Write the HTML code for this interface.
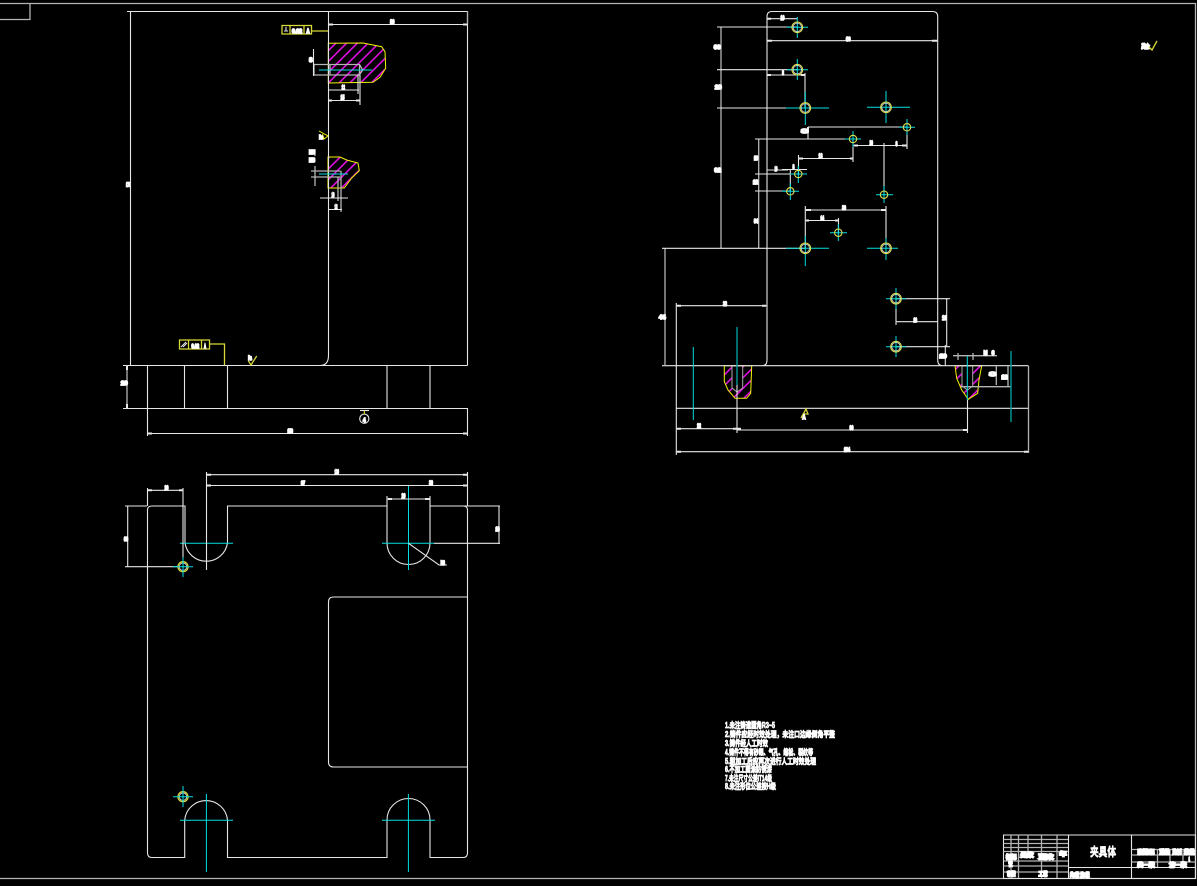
<!DOCTYPE html>
<html lang="zh">
<head>
<meta charset="utf-8">
<title>夹具体</title>
<style>
html,body{margin:0;padding:0;background:#000;width:1197px;height:886px;overflow:hidden}
svg{display:block}
.w{fill:none;stroke:#e6e6e6;stroke-width:1.1}
.g{fill:none;stroke:#b4b4b4;stroke-width:1.3}
.t{fill:none;stroke:#e8e8e8;stroke-width:2}
.c{fill:none;stroke:#00e0e0;stroke-width:1}
.d{fill:none;stroke:#009a9a;stroke-width:1.4}
.y{fill:none;stroke:#f0f000;stroke-width:1}
.y2{fill:none;stroke:#d8d838;stroke-width:1.3}
.h{fill:url(#hatch);stroke:#f4f400;stroke-width:1}
text{font-family:"Liberation Sans","Noto Sans CJK SC",sans-serif;font-weight:bold;fill:#fff;stroke:#fff;stroke-width:1.5;font-size:6.5px}
.n{font-size:8px;stroke-width:.8}
.b{font-size:12px;stroke-width:.6}
.s{font-size:5.5px;stroke-width:1.7}
</style>
</head>
<body>
<svg width="1197" height="886" viewBox="0 0 1197 886" xmlns="http://www.w3.org/2000/svg">
<defs>
<pattern id="hatch" patternUnits="userSpaceOnUse" width="7.6" height="7.6" patternTransform="rotate(45)">
<rect width="7.6" height="7.6" fill="#000"/>
<line x1="2" y1="0" x2="2" y2="7.6" stroke="#ee10ee" stroke-width="1.5"/>
</pattern>
</defs>
<rect width="1197" height="886" fill="#000"/>

<!-- drawing frame -->
<path class="g" d="M30 3.5H1195.5V878.5H0M0 3.5H30V19.5H0"/>

<!-- FRONT VIEW -->
<path class="h" d="M328.3 43.3L363 43L381.7 46.7L385 51.7L385.7 68.3L380 77.3L373 82.3L328.3 83Z"/>
<path class="h" d="M328 157L340 157L346.7 160L358 163L359.3 170.7L351.7 178L344.3 188L328 188Z"/>
<path class="w" d="M127 11.5H467.5V365.5M130.5 11V365.5M328.5 11V355.5Q328.5 365.5 320 365.5M123 365.5H467.5M123 408.5H467.5M147.5 365.5V436M184.5 365.5V408M227.5 365.5V408M387 365.5V408M430 365.5V408M467.5 408V436M147.5 433.5H467.5M328.5 24.5H467.5"/>
<path class="g" d="M127 365.5V408M467.5 11V24"/>
<path class="t" d="M127 366V370M127 404V408M148 433.5H152M463 433.5H467M328 24.5H333M463 24.5H467"/>
<!-- hole 1 -->
<path class="g" d="M314 64.5H359.5V75H314ZM330 64.5V75M359.5 64.5L362.6 70L359.5 75"/>
<path class="c" d="M319 70H372"/>
<path class="w" d="M313.5 49V76M328 90H359M328 100.5H360M360 75V105M358 75V94"/>
<path class="t" d="M328 100.5H332M356 100.5H360"/>
<!-- hole 2 -->
<path class="g" d="M311 171H340.5M311 177H340M341 171V212M338 177V201M315 149V156M315 166V186"/>
<path class="c" d="M319 174H348"/>
<path class="w" d="M320 198H348M328 209.5H342"/>
<!-- tolerance frames -->
<path class="y2" d="M282 25.5H311.5V34H282ZM290 25.5V34M304 25.5V34M311.5 31H328"/>
<path class="w" d="M284 31H288M286 27V31"/>
<path class="y2" d="M179.5 340H209.5V349H179.5ZM188.5 340V349M201.5 340V349M209.5 344H224.5V365"/>
<path class="w" d="M181 347L186 342M183 347L187 343"/>
<!-- roughness marks -->
<path class="y" d="M319 131L328 136L324 139L322.5 134"/>
<path class="y2" d="M248.3 360.7L251 365L256.7 356"/>
<!-- datum -->
<circle class="w" cx="364.3" cy="418.7" r="4.6"/>
<path class="w" d="M360 410.5H369"/>
<path class="y" d="M364.3 411V414"/>
<text x="363" y="422" textLength="2.5" lengthAdjust="spacingAndGlyphs" class="s">4</text>
<text x="390" y="24" textLength="4.5" lengthAdjust="spacingAndGlyphs">80</text>
<text x="292" y="33" textLength="10" lengthAdjust="spacingAndGlyphs" class="s">0.02</text>
<text x="306.5" y="33" textLength="3" lengthAdjust="spacingAndGlyphs" class="s">A</text>
<text x="309" y="62" textLength="3.5" lengthAdjust="spacingAndGlyphs">8</text>
<text x="341.5" y="89.5" textLength="3.5" lengthAdjust="spacingAndGlyphs">12</text>
<text x="340.5" y="99.5" textLength="4" lengthAdjust="spacingAndGlyphs">15</text>
<text x="319" y="139" textLength="4" lengthAdjust="spacingAndGlyphs" class="s">Ra</text>
<text x="309" y="154" textLength="6" lengthAdjust="spacingAndGlyphs" class="s">M6</text>
<text x="309" y="162" textLength="6" lengthAdjust="spacingAndGlyphs" class="s">M8</text>
<text x="331.5" y="197" textLength="3" lengthAdjust="spacingAndGlyphs">10</text>
<text x="334.5" y="209" textLength="3" lengthAdjust="spacingAndGlyphs">12</text>
<text x="126" y="186.5" textLength="4" lengthAdjust="spacingAndGlyphs" class="s">178</text>
<text x="121" y="385" textLength="6.5" lengthAdjust="spacingAndGlyphs" class="s">20</text>
<text x="287.5" y="433" textLength="5.5" lengthAdjust="spacingAndGlyphs" class="s">150</text>
<text x="248" y="360" textLength="4" lengthAdjust="spacingAndGlyphs">Ra</text>
<text x="191.5" y="348" textLength="7.5" lengthAdjust="spacingAndGlyphs" class="s">0.02</text>
<text x="204" y="348" textLength="2" lengthAdjust="spacingAndGlyphs" class="s">A</text>

<!-- PLAN VIEW -->
<path class="w" d="M152 506H185V543A21.5 21.5 0 0 0 227.5 543V506H387V543A21.5 21.5 0 0 0 430 543V506H463Q467.5 506 467.5 510V853Q467.5 857.5 463 857.5H430V820A21.5 21.5 0 0 0 387 820V857.5H227.5V820A21.5 21.5 0 0 0 184.7 820V857.5H152Q147.5 857.5 147.5 853V510Q147.5 506 152 506Z"/>
<path class="w" d="M467.5 597H333.5Q328.5 597 328.5 602V762Q328.5 767 333.5 767H467.5"/>
<path class="c" d="M180 543.3H233M382 543.3H434M408.5 485V570M180 820.3H233M206.4 794V872M382 820.3H435M408.4 794V872"/>
<path class="w" d="M206.5 472V570M467.5 472V506M147.5 488V506M183 488V558M387 496V506M430 496V506M125 506H147M125 566.7H178M127.7 506V566.7M147.5 490.3H183M206.5 474.7H467.5M206.5 485.5H408M408 485.5H467.5M387 499H430M434 543.3H500M430 506H500M499 506V544M408.5 543.3L439 565H447"/>
<path class="t" d="M148 490.3H152M179 490.3H183M207 474.7H211M463 474.7H467M207 485.5H211M463 485.5H467M388 499H392M425 499H430"/>
<text x="164.5" y="490" textLength="4" lengthAdjust="spacingAndGlyphs">20</text>
<text x="334.5" y="474" textLength="4.5" lengthAdjust="spacingAndGlyphs">130</text>
<text x="301" y="485" textLength="4" lengthAdjust="spacingAndGlyphs" class="s">97</text>
<text x="429" y="485" textLength="4" lengthAdjust="spacingAndGlyphs">30</text>
<text x="401.5" y="498" textLength="4" lengthAdjust="spacingAndGlyphs">20</text>
<text x="124" y="541" textLength="4" lengthAdjust="spacingAndGlyphs" class="s">30</text>
<text x="495.5" y="531" textLength="4" lengthAdjust="spacingAndGlyphs" class="s">18</text>
<text x="440.5" y="565" textLength="4.5" lengthAdjust="spacingAndGlyphs">R8</text>

<g id="cp">
<circle class="y2" cx="183" cy="566.7" r="5"/>
<circle cx="183" cy="566.7" r="3.7" fill="none" stroke="#ddd" stroke-width=".8"/>
<path class="c" d="M173 566.7H193M183 557V577"/>
<circle class="y2" cx="183" cy="796.7" r="5"/>
<circle cx="183" cy="796.7" r="3.7" fill="none" stroke="#ddd" stroke-width=".8"/>
<path class="c" d="M173 796.7H193M183 786V807"/>
</g>

<!-- RIGHT VIEW -->
<path class="h" d="M724.3 365.7V381.7L728 390L735 398.3H746.7L750.7 393.3L751.7 365.7Z"/>
<path class="h" d="M955 365.7L956.7 378.3L961.7 390L968.3 399.3L977.7 393.3L979 380L981.7 365.7Z"/>
<path d="M732 366H742.7V388L737 392L732 388Z" fill="#000" stroke="#aaa"/>
<path d="M962 366H972.7V386L967.5 390L962 386Z" fill="#000" stroke="#aaa"/>

<path class="w" d="M767 360V16.5Q767 11.5 772 11.5H932.5Q937.7 11.5 937.7 16.5V360Q937.7 365.7 943 365.7H1028.5M767 360Q767 365.7 762 365.7H662M676.3 303V455M676.3 305.7H767M676 408.3H1028.5M762 365.7H943"/>
<path class="g" d="M1028.5 365.7V453M665 248V365.7M721 27V248M758.7 139V248"/>
<path class="w" d="M676.3 428.7H737M737 430H967.5M676.3 451.7H1028.5M737 385V433M967.5 400V433M662 248.3H805M767 18.7H797M767 40.7H937.7M717 27H797M717 69.7H797M717 108H790M767 75H805M805 73V108M808 127H907M808 127V139M755 139H853M853 139V162M755 174H798M755 191H790M853 145.5H907M907 127V149M884 143V195M798.5 158.5H853M798.5 155V175M767 170H788M782 169.5H807M790.3 170V191M805.3 206V248M805.3 210H886M886 206V248M805.3 220.5H838.5M838.5 218V233M896 298.7H950M896 346.7H950M946.7 298V347M896 321.7H938M896 298V325M945.3 345V366"/>
<path class="t" d="M677 428.7H681M733 428.7H741M963 430H967M677 451.7H681M1024 451.7H1028M767 18.7H771M767 40.7H772M932 40.7H937M767 75H771M801 75H805M806 210H811M881 210H886M806 220.5H809M835 220.5H838M677 305.7H681M762 305.7H766M808 127V133M854 145.5H858M902 145.5H907M799 158.5H803M850 158.5H853"/>
<path class="g" d="M953 355.7H997M961 386.7H1011M996.3 365.7V385M1008 365.7V387M958 353V360M973 353V360"/>
<path class="c" d="M693.3 347V420M967.3 356V400"/>
<path class="d" d="M737 327V385M1011 351V422"/>

<!-- holes big -->
<g class="c">
<path d="M787 27.3H808M797.3 17V38M787 69.7H808M797.3 59V80M786 108H829M805.3 92V125M867 107.3H910M886 91V123M786 248.3H829M805.3 236V266M867 248.3H898M886 238V260M886 298.7H906M896 288V309M886 346.7H906M896 336V357"/>
<path d="M899 127.3H915M907 119V135M845 139H861M853 131V147M790 174H807M798.3 166V183M782 191.3H799M790.3 183V200M876 194.7H893M884 186V203M830 232.7H847M838.3 224V241"/>
</g>
<g fill="none" stroke="#dede50" stroke-width="1.1">
<circle cx="797.3" cy="27.3" r="5.3"/><circle cx="797.3" cy="69.7" r="5.3"/><circle cx="805.3" cy="108" r="5.3"/><circle cx="886" cy="107.3" r="5.3"/><circle cx="805.3" cy="248.3" r="5.3"/><circle cx="886" cy="248.3" r="5.3"/><circle cx="896" cy="298.7" r="5.3"/><circle cx="896" cy="346.7" r="5.3"/>
<circle cx="907" cy="127.3" r="3.7"/><circle cx="853" cy="139" r="3.7"/><circle cx="798.3" cy="174" r="3.7"/><circle cx="790.3" cy="191.3" r="3.7"/><circle cx="884" cy="194.7" r="3.7"/><circle cx="838.3" cy="232.7" r="3.7"/>
</g>
<g fill="none" stroke="#e8e8e8" stroke-width=".7">
<circle cx="797.3" cy="27.3" r="4.2"/><circle cx="797.3" cy="69.7" r="4.2"/><circle cx="805.3" cy="108" r="4.2"/><circle cx="886" cy="107.3" r="4.2"/><circle cx="805.3" cy="248.3" r="4.2"/><circle cx="886" cy="248.3" r="4.2"/><circle cx="896" cy="298.7" r="4.2"/><circle cx="896" cy="346.7" r="4.2"/>
</g>

<!-- right view labels -->
<text x="780.5" y="20" textLength="4" lengthAdjust="spacingAndGlyphs">10</text>
<text x="846" y="41" textLength="4.5" lengthAdjust="spacingAndGlyphs" class="s">60</text>
<text x="714" y="49" textLength="6.5" lengthAdjust="spacingAndGlyphs" class="s">30</text>
<text x="715" y="89" textLength="6.5" lengthAdjust="spacingAndGlyphs" class="s">28</text>
<text x="714.5" y="172" textLength="6.5" lengthAdjust="spacingAndGlyphs" class="s">92</text>
<text x="782" y="75" textLength="2" lengthAdjust="spacingAndGlyphs">8</text>
<text x="801.5" y="133" textLength="6" lengthAdjust="spacingAndGlyphs" class="s">8</text>
<text x="754" y="160" textLength="4" lengthAdjust="spacingAndGlyphs" class="s">16</text>
<text x="753" y="184" textLength="5" lengthAdjust="spacingAndGlyphs" class="s">12</text>
<text x="754" y="223" textLength="4" lengthAdjust="spacingAndGlyphs" class="s">34</text>
<text x="869.5" y="145" textLength="3.5" lengthAdjust="spacingAndGlyphs">20</text>
<text x="895.5" y="146" textLength="2" lengthAdjust="spacingAndGlyphs">8</text>
<text x="818.5" y="158" textLength="4" lengthAdjust="spacingAndGlyphs">18</text>
<text x="774.5" y="171" textLength="3" lengthAdjust="spacingAndGlyphs">10</text>
<text x="792.5" y="169" textLength="2" lengthAdjust="spacingAndGlyphs">8</text>
<text x="842" y="210" textLength="4" lengthAdjust="spacingAndGlyphs">30</text>
<text x="820.5" y="220" textLength="3.5" lengthAdjust="spacingAndGlyphs" class="s">14</text>
<text x="723" y="306" textLength="4" lengthAdjust="spacingAndGlyphs">33</text>
<text x="659" y="319" textLength="6.5" lengthAdjust="spacingAndGlyphs" class="s">44</text>
<text x="913.5" y="322" textLength="3.5" lengthAdjust="spacingAndGlyphs" class="s">16</text>
<text x="942" y="320" textLength="4.5" lengthAdjust="spacingAndGlyphs">18</text>
<text x="939.5" y="358" textLength="7" lengthAdjust="spacingAndGlyphs" class="s">10</text>
<text x="983.5" y="355" textLength="4" lengthAdjust="spacingAndGlyphs">M</text>
<text x="991.5" y="355" textLength="3" lengthAdjust="spacingAndGlyphs">6</text>
<text x="989.5" y="376" textLength="6" lengthAdjust="spacingAndGlyphs" class="s">8</text>
<text x="1001.5" y="379" textLength="6" lengthAdjust="spacingAndGlyphs" class="s">12</text>
<text x="697" y="428" textLength="4" lengthAdjust="spacingAndGlyphs">22</text>
<text x="849.5" y="430" textLength="4" lengthAdjust="spacingAndGlyphs">90</text>
<text x="844" y="451.5" textLength="6" lengthAdjust="spacingAndGlyphs" class="s">134</text>
<path class="y2" d="M801 418L806 409L808 414L803 414"/>
<text x="802.5" y="419" textLength="3" lengthAdjust="spacingAndGlyphs" class="s">A</text>

<!-- general roughness -->
<text x="1141.5" y="48.5" textLength="8" lengthAdjust="spacingAndGlyphs" class="s">其余</text>
<path class="y2" d="M1149 47L1152 50L1157 41"/>

<!-- notes -->
<g>
<text class="n" x="725" y="728" textLength="50" lengthAdjust="spacingAndGlyphs">1.未注铸造圆角R3~5</text>
<text class="n" x="725" y="737" textLength="110" lengthAdjust="spacingAndGlyphs">2.铸件应经时效处理，未注口边缘倒角平整</text>
<text class="n" x="725" y="746" textLength="43" lengthAdjust="spacingAndGlyphs">3.铸件经人工时效</text>
<text class="n" x="725" y="755" textLength="88" lengthAdjust="spacingAndGlyphs">4.铸件不得有砂眼、气孔、缩松、裂纹等</text>
<text class="n" x="725" y="764" textLength="91" lengthAdjust="spacingAndGlyphs">5.粗加工后应再次进行人工时效处理</text>
<text class="n" x="725" y="772" textLength="47" lengthAdjust="spacingAndGlyphs">6.不加工面涂防锈漆</text>
<text class="n" x="725" y="781" textLength="47" lengthAdjust="spacingAndGlyphs">7.未注尺寸公差IT14级</text>
<text class="n" x="725" y="789" textLength="51" lengthAdjust="spacingAndGlyphs">8.未注形位公差按H级</text>
</g>

<!-- title block -->
<path class="w" d="M1003.5 835H1195.5V878.5H1003.5ZM1068.5 835V878.5M1131.5 835V878.5M1068.5 867.5H1195.5"/>
<path class="g" d="M1003.5 839.5H1068M1003.5 843.5H1068M1003.5 847.5H1068M1003.5 851.5H1068M1003.5 861H1068M1003.5 866H1068M1003.5 872H1068M1011 835V878M1018.5 835V878M1041.5 835V878M1057 835V878M1028 835V852M1131.5 849.5H1195.5M1131.5 855H1195.5M1131.5 862H1195.5M1157.5 850V867M1170 850V862M1183 850V862"/>
<text class="s" x="1006" y="859" textLength="10.5" lengthAdjust="spacingAndGlyphs">标记</text>
<text class="s" x="1020.5" y="857" textLength="13" lengthAdjust="spacingAndGlyphs">处数</text>
<text class="s" x="1038.5" y="859" textLength="15" lengthAdjust="spacingAndGlyphs">更改</text>
<text class="s" x="1059.5" y="856" textLength="7" lengthAdjust="spacingAndGlyphs">年</text>
<text class="s" x="1008.5" y="866" textLength="4" lengthAdjust="spacingAndGlyphs">设</text>
<text class="s" x="1007" y="876" textLength="8.5" lengthAdjust="spacingAndGlyphs">审核</text>
<text class="s" x="1038.5" y="876" textLength="9" lengthAdjust="spacingAndGlyphs">工艺</text>
<text class="b" x="1090" y="856" textLength="26" lengthAdjust="spacingAndGlyphs">夹具体</text>
<text class="s" x="1070" y="877" textLength="19.5" lengthAdjust="spacingAndGlyphs">共1张 第1张</text>
<text class="s" x="1137.5" y="854" textLength="17" lengthAdjust="spacingAndGlyphs">阶段标记</text>
<text class="s" x="1159.5" y="854" textLength="10" lengthAdjust="spacingAndGlyphs">重量</text>
<text class="s" x="1172.5" y="854" textLength="9" lengthAdjust="spacingAndGlyphs">比例</text>
<text class="s" x="1184.5" y="854" textLength="10" lengthAdjust="spacingAndGlyphs">数量</text>
<text class="s" x="1188.5" y="861" textLength="1.5" lengthAdjust="spacingAndGlyphs">1</text>
<text class="s" x="1137.5" y="867" textLength="17" lengthAdjust="spacingAndGlyphs">共一张</text>
<text class="s" x="1169.5" y="867" textLength="17" lengthAdjust="spacingAndGlyphs">第一张</text>
</svg>
</body>
</html>
